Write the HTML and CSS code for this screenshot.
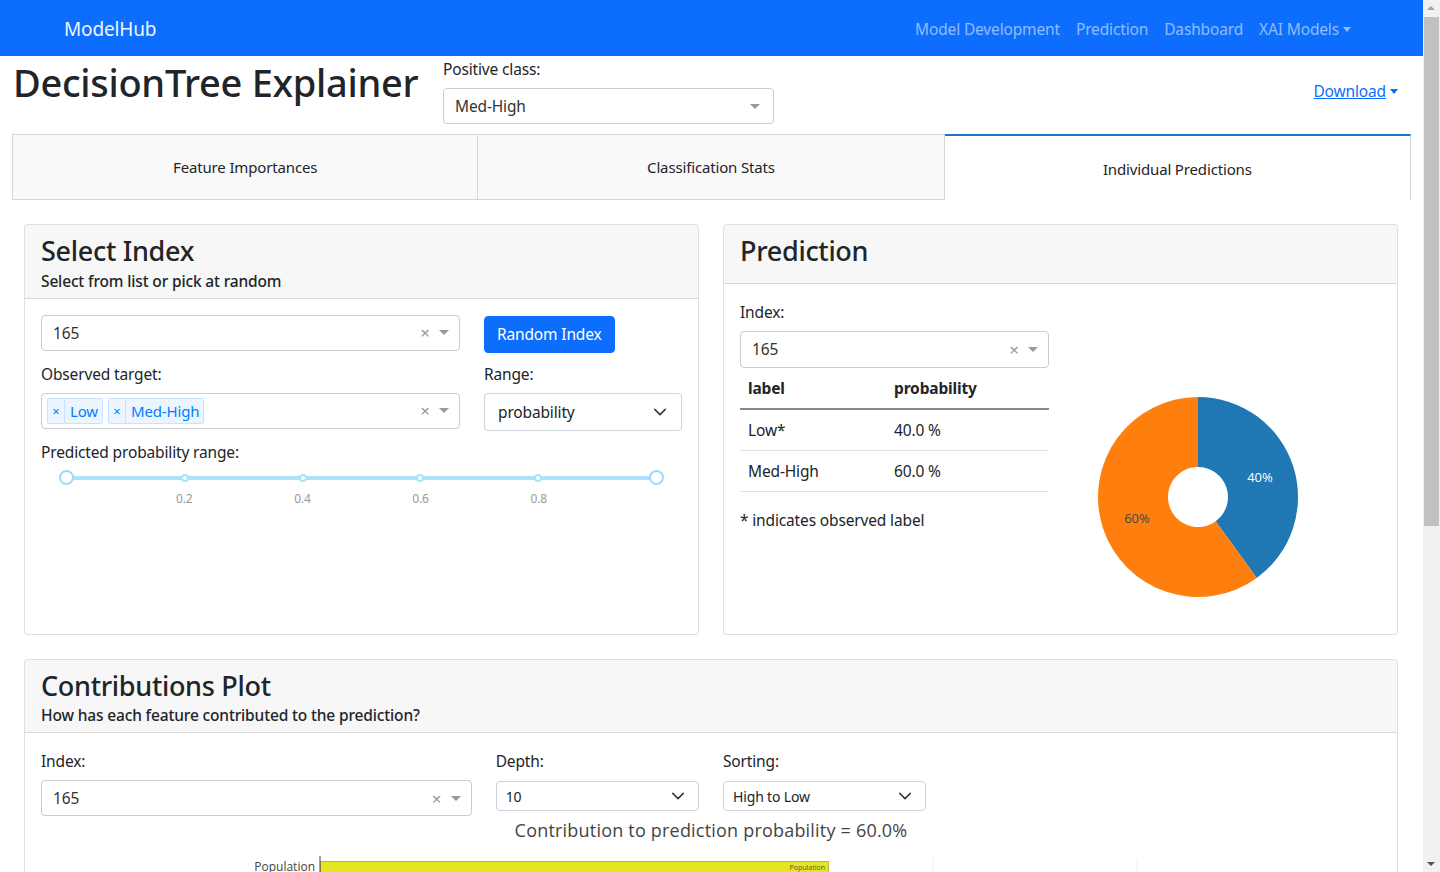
FILE: index.html
```html
<!DOCTYPE html>
<html lang="en">
<head>
<meta charset="utf-8">
<title>DecisionTree Explainer</title>
<link rel="stylesheet" href="styles.css">
</head>
<body>
<div class="page">
  <nav class="navbar">
    <span class="brand">ModelHub</span>
    <div class="nav-links">
      <a class="nav-link">Model Development</a>
      <a class="nav-link">Prediction</a>
      <a class="nav-link">Dashboard</a>
      <a class="nav-link">XAI Models<span class="caret caret-nav"></span></a>
    </div>
  </nav>

  <header class="title-row">
    <h1 class="main-title">DecisionTree Explainer</h1>
    <div class="pos-class">
      <label class="lbl">Positive class:</label>
      <div class="dd dd-pos">
        <span class="dd-val">Med-High</span>
        <span class="dd-arrow"></span>
      </div>
    </div>
    <div class="download-wrap">
      <a class="download">Download</a><span class="caret caret-dl"></span>
    </div>
  </header>

  <div class="tabs">
    <div class="tab">Feature Importances</div>
    <div class="tab">Classification Stats</div>
    <div class="tab tab-active">Individual Predictions</div>
  </div>

  <div class="cards-row">
    <section class="card">
      <div class="card-header">
        <h3 class="card-title">Select Index</h3>
        <h6 class="card-sub">Select from list or pick at random</h6>
      </div>
      <div class="card-body">
        <div class="sel-grid">
          <div class="dd">
            <span class="dd-val">165</span>
            <span class="dd-clear">×</span>
            <span class="dd-arrow"></span>
          </div>
          <div><button class="btn-primary">Random Index</button></div>

          <div class="field">
            <label class="lbl">Observed target:</label>
            <div class="dd dd-multi">
              <span class="dd-val">
                <span class="tag"><span class="tag-x">×</span><span class="tag-txt">Low</span></span>
                <span class="tag"><span class="tag-x">×</span><span class="tag-txt">Med-High</span></span>
              </span>
              <span class="dd-clear">×</span>
              <span class="dd-arrow"></span>
            </div>
          </div>
          <div class="field">
            <label class="lbl">Range:</label>
            <div class="native-sel">
              <span>probability</span>
              <svg class="chev" width="14" height="14" viewBox="0 0 16 16"><path d="M2 5l6 6 6-6" fill="none" stroke="#343a40" stroke-width="1.8" stroke-linecap="round" stroke-linejoin="round"/></svg>
            </div>
          </div>
        </div>
        <label class="lbl lbl-range">Predicted probability range:</label>
        <div class="slider">
          <div class="slider-track">
            <span class="handle"></span>
            <span class="dot"></span>
            <span class="dot"></span>
            <span class="dot"></span>
            <span class="dot"></span>
            <span class="handle"></span>
          </div>
          <div class="slider-marks">
            <span class="mark"></span>
            <span class="mark">0.2</span>
            <span class="mark">0.4</span>
            <span class="mark">0.6</span>
            <span class="mark">0.8</span>
            <span class="mark"></span>
          </div>
        </div>
      </div>
    </section>

    <section class="card">
      <div class="card-header card-header-single">
        <h3 class="card-title">Prediction</h3>
      </div>
      <div class="card-body pred-body">
        <div class="pred-left">
          <label class="lbl">Index:</label>
          <div class="dd dd-pred">
            <span class="dd-val">165</span>
            <span class="dd-clear">×</span>
            <span class="dd-arrow"></span>
          </div>
          <table class="ptable">
            <thead>
              <tr><th>label</th><th>probability</th></tr>
            </thead>
            <tbody>
              <tr><td>Low*</td><td>40.0 %</td></tr>
              <tr><td>Med-High</td><td>60.0 %</td></tr>
            </tbody>
          </table>
          <p class="note">* indicates observed label</p>
        </div>
        <div class="pred-right">
          <svg class="pie" width="309" height="313" viewBox="0 0 309 313">
            <g transform="translate(125,197)">
              <path d="M0,-100 A100,100 0 0 1 58.78,80.90 L17.63,24.27 A30,30 0 0 0 0,-30 Z" fill="#1f77b4"/>
              <path d="M58.78,80.90 A100,100 0 1 1 0,-100 L0,-30 A30,30 0 1 0 17.63,24.27 Z" fill="#ff7f0e"/>
              <text x="62" y="-15" class="pie-lbl pie-lbl-w" text-anchor="middle">40%</text>
              <text x="-61" y="26" class="pie-lbl pie-lbl-d" text-anchor="middle">60%</text>
            </g>
          </svg>
        </div>
      </div>
    </section>
  </div>

  <section class="card card-wide">
    <div class="card-header">
      <h3 class="card-title">Contributions Plot</h3>
      <h6 class="card-sub">How has each feature contributed to the prediction?</h6>
    </div>
    <div class="card-body">
      <div class="contrib-grid">
        <div class="field span4">
          <label class="lbl">Index:</label>
          <div class="dd">
            <span class="dd-val">165</span>
            <span class="dd-clear">×</span>
            <span class="dd-arrow"></span>
          </div>
        </div>
        <div class="field span2">
          <label class="lbl">Depth:</label>
          <div class="native-sel native-sm">
            <span>10</span>
            <svg class="chev" width="14" height="14" viewBox="0 0 16 16"><path d="M2 5l6 6 6-6" fill="none" stroke="#343a40" stroke-width="1.8" stroke-linecap="round" stroke-linejoin="round"/></svg>
          </div>
        </div>
        <div class="field span2">
          <label class="lbl">Sorting:</label>
          <div class="native-sel native-sm">
            <span>High to Low</span>
            <svg class="chev" width="14" height="14" viewBox="0 0 16 16"><path d="M2 5l6 6 6-6" fill="none" stroke="#343a40" stroke-width="1.8" stroke-linecap="round" stroke-linejoin="round"/></svg>
          </div>
        </div>
      </div>
      <div class="plot-title">Contribution to prediction probability = 60.0%</div>
      <svg class="plot" width="1340" height="300" viewBox="0 0 1340 300">
        <line x1="892" y1="12" x2="892" y2="300" stroke="#eeeeee" stroke-width="1"/>
        <line x1="1096" y1="12" x2="1096" y2="300" stroke="#eeeeee" stroke-width="1"/>
        <rect x="279.5" y="15.5" width="508" height="60" fill="#e4e620" stroke="#b6b83a" stroke-width="1"/>
        <line x1="279" y1="10" x2="279" y2="300" stroke="#444" stroke-width="1"/>
        <text x="274" y="25" class="tick" text-anchor="end">Population</text>
        <text x="784" y="24" class="bar-lbl" text-anchor="end">Population</text>
      </svg>
    </div>
  </section>
</div>

<div class="fake-scroll">
  <span class="sc-arrow sc-up"></span>
  <span class="sc-thumb"></span>
  <span class="sc-arrow sc-down"></span>
</div>
</body>
</html>
```

FILE: styles.css
```css
html { overflow: hidden; }
* { box-sizing: border-box; }
body {
  margin: 0;
  font-family: "Noto Sans", "Open Sans", sans-serif;
  font-size: 15.5px;
  letter-spacing: -0.15px;
  color: #212529;
  background: #fff;
}
.page { width: 1423px; }

/* navbar */
.navbar {
  height: 56px;
  background: #0d6efd;
  display: flex;
  align-items: center;
  justify-content: space-between;
  padding: 2px 64px 0 64px;
}
.brand { color: #eef5ff; font-size: 19px; }
.nav-links { display: flex; }
.nav-link {
  color: rgba(255,255,255,.55);
  padding: 0 8px;
  font-size: 15.5px;
}
.caret {
  display: inline-block;
  width: 0; height: 0;
  border-left: 4px solid transparent;
  border-right: 4px solid transparent;
  border-top: 5px solid;
  vertical-align: 3px;
  margin-left: 4px;
}
.caret-nav { color: rgba(255,255,255,.55); }
.caret-dl { color: #0d6efd; }

/* title row */
.title-row {
  display: grid;
  grid-template-columns: 431px 331px 1fr;
  padding: 0 25px 0 12px;
  height: 78px;
}
.main-title {
  margin: 2px 0 0 1px;
  font-size: 38px;
  letter-spacing: -0.3px;
  font-weight: 500;
  line-height: 48px;
  white-space: nowrap;
}
.lbl { display: block; line-height: 24px; }
.pos-class { padding-top: 1px; }
.pos-class .lbl { margin-bottom: 7px; }
.download-wrap { text-align: right; padding-top: 24px; }
.download { color: #0d6efd; text-decoration: underline; }

/* dropdowns */
.dd {
  height: 36px;
  border: 1px solid #ccc;
  border-radius: 4px;
  background: #fff;
  display: flex;
  align-items: center;
  padding-left: 11px;
  color: #333;
}
.dd-val { flex: 1; display: flex; align-items: center; }
.dd-clear { color: #999; font-size: 17px; width: 18px; text-align: center; }
.dd-arrow {
  width: 25px;
  display: flex;
  justify-content: center;
  padding-right: 5px;
}
.dd-arrow::before {
  content: "";
  border-left: 5px solid transparent;
  border-right: 5px solid transparent;
  border-top: 5px solid #999;
}
.dd-pos .dd-arrow { width: 31px; }

.tag {
  display: inline-flex;
  align-items: center;
  height: 26px;
  background: #ebf5ff;
  border: 1px solid #c9e3ff;
  border-radius: 2px;
  color: #007eff;
  font-size: 15px;
  margin-right: 5px;
}
.tag-x {
  width: 17px;
  text-align: center;
  border-right: 1px solid #c9e3ff;
  font-size: 13px;
  height: 100%;
  line-height: 24px;
}
.tag-txt { padding: 0 4px 0 5px; }
.dd-multi { padding-left: 5px; }

.native-sel {
  height: 38px;
  border: 1px solid #ced4da;
  border-radius: 4px;
  display: flex;
  align-items: center;
  justify-content: space-between;
  padding: 0 14px 0 13px;
  color: #212529;
}
.native-sm { height: 30px; font-size: 14px; padding: 0 13px 0 9px; }

.btn-primary {
  background: #0d6efd;
  color: #fff;
  border: 1px solid #0d6efd;
  border-radius: 4px;
  font-family: inherit;
  font-size: 15.5px;
  letter-spacing: -0.15px;
  height: 37px;
  padding: 0 12px;
  margin-top: 1px;
}

/* tabs */
.tabs {
  display: grid;
  grid-template-columns: repeat(3, 1fr);
  margin: 0 12px;
  height: 66px;
  font-size: 15px;
}
.tab {
  display: flex;
  align-items: center;
  justify-content: center;
  background: #f9f9f9;
  border: 1px solid #d6d6d6;
  border-left: none;
  color: #212529;
}
.tab:first-child { border-left: 1px solid #d6d6d6; }
.tab-active {
  background: #fff;
  border-top: 2px solid #1f73c4;
  border-bottom: none;
  border-left: none;
  padding-top: 2px;
}

/* cards */
.cards-row {
  display: grid;
  grid-template-columns: minmax(0, 1fr) minmax(0, 1fr);
  gap: 24px;
  padding: 24px 25px 0 24px;
}
.card {
  border: 1px solid rgba(0,0,0,.125);
  border-radius: 4px;
  background: #fff;
}
.card-header {
  background: #f7f7f7;
  border-bottom: 1px solid rgba(0,0,0,.125);
  padding: 9px 16px 7px;
  border-radius: 4px 4px 0 0;
}
.card-header-single { padding-bottom: 15px; }
.card-title {
  margin: 0;
  font-size: 27px;
  letter-spacing: -0.3px;
  font-weight: 500;
  line-height: 33.6px;
}
.card-sub {
  margin: 4px 0 0;
  font-size: 15.5px;
  font-weight: 500;
  line-height: 19.2px;
}
.card-body { padding: 16px; }

.sel-grid {
  display: grid;
  grid-template-columns: 419px 1fr;
  column-gap: 24px;
  row-gap: 9px;
}
.field .lbl { margin-bottom: 7px; }
.lbl-range { margin-top: 9px; }

/* slider */
.slider { padding: 7px 18px 0 18px; }
.slider-track {
  position: relative;
  height: 14px;
  margin: 0 7px;
  display: flex;
  align-items: center;
  justify-content: space-between;
}
.slider-track::before {
  content: "";
  position: absolute;
  left: 0; right: 0; top: 5px;
  height: 4px;
  background: #abe2fb;
  border-radius: 2px;
}
.handle, .dot {
  position: relative;
  background: #fff;
  border-radius: 50%;
}
.handle {
  width: 15px; height: 15px;
  border: 2px solid #96dbfa;
  margin: 0 -7px;
}
.dot {
  width: 8px; height: 8px;
  border: 2px solid #abe2fb;
  margin: 0 -4px;
}
.slider-marks {
  display: flex;
  justify-content: space-between;
  margin: 5px 7px 0;
}
.mark {
  width: 0;
  display: flex;
  justify-content: center;
  font-size: 12px;
  color: #999;
}

/* prediction */
.pred-body {
  display: grid;
  grid-template-columns: 309px minmax(0, 1fr);
  column-gap: 24px;
}
.dd-pred { margin-top: 7px; height: 37px; }
.ptable {
  width: 100%;
  border-collapse: collapse;
  margin-bottom: 16px;
}
.ptable th, .ptable td {
  text-align: left;
  padding: 8px;
  line-height: 24px;
}
.ptable th { font-weight: 700; border-bottom: 2px solid #888; }
.ptable th:first-child { width: 146px; }
.ptable td { border-bottom: 1px solid #dee2e6; }
.note { margin: 0; line-height: 24px; }
.pie-lbl { font-family: "Open Sans", sans-serif; font-size: 13px; letter-spacing: 0; }
.pie-lbl-w { fill: #fff; }
.pie-lbl-d { fill: #444; }

/* contributions */
.card-wide { margin: 24px 25px 0 24px; }
.contrib-grid {
  display: grid;
  grid-template-columns: repeat(12, minmax(0, 1fr));
  column-gap: 24px;
}
.span4 { grid-column: span 4; }
.span2 { grid-column: span 2; }
.span2 .native-sel { margin-top: 8px; }
.span2 .lbl { margin-bottom: 0; }
.plot-title {
  text-align: center;
  font-family: "Open Sans", sans-serif;
  font-size: 18px;
  letter-spacing: 0.2px;
  color: #444;
  margin-top: 2px;
  line-height: 24px;
}
.plot { display: block; margin-top: 4px; }
.tick { font-family: "Open Sans", sans-serif; font-size: 12px; fill: #444; letter-spacing: 0; }
.bar-lbl { font-family: "Open Sans", sans-serif; font-size: 7px; fill: #555; letter-spacing: 0; }

/* fake scrollbar (overlay) */
.fake-scroll {
  position: fixed;
  top: 0; right: 0;
  width: 17px; height: 100%;
  background: #f1f1f1;
}
.sc-thumb {
  position: absolute;
  left: 1px; right: 1px;
  top: 17px; height: 509px;
  background: #c1c1c1;
}
.sc-arrow {
  position: absolute;
  left: 4px;
  border-left: 4px solid transparent;
  border-right: 4px solid transparent;
}
.sc-up { top: 6px; border-bottom: 4px solid #a3a3a3; }
.sc-down { bottom: 6px; border-top: 4px solid #505050; }
```
